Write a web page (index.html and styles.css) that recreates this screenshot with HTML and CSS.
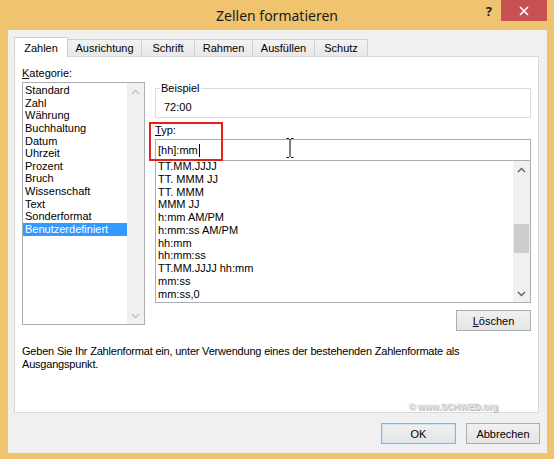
FILE: index.html
```html
<!DOCTYPE html>
<html lang="de">
<head>
  <meta charset="UTF-8" />
  <title>Zellen formatieren</title>
  <link rel="stylesheet" href="styles.css">
</head>
<body>
  <div class="window">
    <div class="titlebar">
      <span></span>
      <div class="title">Zellen formatieren</div>
      <div class="controls">
        <span class="help">?</span>
        <span class="close">
          <svg width="10" height="10" viewBox="0 0 10 10"><path d="M1 1L9 9M9 1L1 9" stroke="#fff" stroke-width="1.7"/></svg>
        </span>
      </div>
    </div>

    <div class="client">
      <div class="tabs">
        <div class="tab active tab-zahlen">Zahlen</div>
        <div class="tab tab-ausrichtung">Ausrichtung</div>
        <div class="tab tab-schrift">Schrift</div>
        <div class="tab tab-rahmen">Rahmen</div>
        <div class="tab tab-ausfuellen">Ausfüllen</div>
        <div class="tab tab-schutz">Schutz</div>
      </div>

      <div class="panel">
        <div class="columns">
          <div class="col-left">
            <div class="label"><u>K</u>ategorie:</div>
            <div class="listbox categories">
              <ul class="items">
                <li>Standard</li>
                <li>Zahl</li>
                <li>Währung</li>
                <li>Buchhaltung</li>
                <li>Datum</li>
                <li>Uhrzeit</li>
                <li>Prozent</li>
                <li>Bruch</li>
                <li>Wissenschaft</li>
                <li>Text</li>
                <li>Sonderformat</li>
                <li class="selected">Benutzerdefiniert</li>
              </ul>
              <div class="vscroll disabled">
                <span class="arrow"><svg width="9" height="6" viewBox="0 0 9 6"><polyline points="1,5 4.5,1.5 8,5" fill="none" stroke-width="1.4"/></svg></span>
                <span class="arrow"><svg width="9" height="6" viewBox="0 0 9 6"><polyline points="1,1 4.5,4.5 8,1" fill="none" stroke-width="1.4"/></svg></span>
              </div>
            </div>
          </div>

          <div class="col-right">
            <fieldset class="group">
              <legend>Beispiel</legend>
              <div class="sample">72:00</div>
            </fieldset>

            <div class="typ-area">
              <div class="label"><u>T</u>yp:</div>
              <div class="input">[hh]:mm<span class="caret"></span></div>
              <div class="listbox formats">
                <ul class="items">
                  <li>TT.MM.JJJJ</li>
                  <li>TT. MMM JJ</li>
                  <li>TT. MMM</li>
                  <li>MMM JJ</li>
                  <li>h:mm AM/PM</li>
                  <li>h:mm:ss AM/PM</li>
                  <li>hh:mm</li>
                  <li>hh:mm:ss</li>
                  <li>TT.MM.JJJJ hh:mm</li>
                  <li>mm:ss</li>
                  <li>mm:ss,0</li>
                </ul>
                <div class="vscroll">
                  <span class="arrow"><svg width="9" height="6" viewBox="0 0 9 6"><polyline points="1,5 4.5,1.5 8,5" fill="none" stroke-width="1.4"/></svg></span>
                  <span class="track"><span class="thumb"></span></span>
                  <span class="arrow"><svg width="9" height="6" viewBox="0 0 9 6"><polyline points="1,1 4.5,4.5 8,1" fill="none" stroke-width="1.4"/></svg></span>
                </div>
              </div>
              <span class="highlight"></span>
              <svg class="ibeam" width="8" height="20" viewBox="0 0 8 20">
                <path d="M0.5 0.5H3M5 0.5H7.5M4 1V19M0.5 19.5H3M5 19.5H7.5" stroke="#000" stroke-width="1" fill="none"/>
              </svg>
            </div>

            <div class="row-end">
              <button class="btn btn-delete"><u>L</u>öschen</button>
            </div>
          </div>
        </div>

        <p class="hint">Geben Sie Ihr Zahlenformat ein, unter Verwendung eines der bestehenden Zahlenformate als Ausgangspunkt.</p>

        <div class="watermark">© www.SCHWED.org</div>
      </div>

      <div class="buttons">
        <button class="btn btn-default">OK</button>
        <button class="btn btn-cancel">Abbrechen</button>
      </div>
    </div>
  </div>
</body>
</html>
```

FILE: styles.css
```css
:root {
  --frame: #f0c46e;
  --face: #f0f0f0;
  --line: #d9d9d9;
  --field-border: #abadb3;
  --select: #3399ff;
}

body {
  margin: 0;
  width: 554px;
  height: 459px;
  overflow: hidden;
  background-color: var(--frame);
  font-family: "Liberation Sans", Arial, sans-serif;
  font-size: 11px;
  color: #000;
}

.window {
  display: flex;
  flex-direction: column;
  height: 100%;
}

/* title bar */

.titlebar {
  height: 30px;
  display: grid;
  grid-template-columns: 1fr auto 1fr;
  align-items: start;
}

.title {
  font-family: "Noto Sans", sans-serif;
  font-size: 14px;
  line-height: 28px;
  padding-top: 2px;
  color: #1a1a1a;
}

.controls {
  justify-self: end;
  display: flex;
  align-items: flex-start;
  padding-right: 7px;
}

.help {
  font-family: "Noto Sans", sans-serif;
  font-size: 13px;
  font-weight: bold;
  line-height: 22px;
  margin-right: 9px;
  color: #222;
}

.close {
  width: 46px;
  height: 21px;
  background-color: #c75050;
  display: flex;
  align-items: center;
  justify-content: center;
}

/* dialog body */

.client {
  flex: 1;
  margin: 0 7px 6px 8px;
  padding: 7px 8px 9px 6px;
  background-color: var(--face);
  display: flex;
  flex-direction: column;
}

.tabs {
  display: flex;
  align-items: flex-end;
  height: 19px;
  position: relative;
  z-index: 1;
}

.tab {
  box-sizing: border-box;
  height: 17px;
  border: 1px solid #d0d0d0;
  border-left: none;
  border-bottom: none;
  background: linear-gradient(#f2f2f2, #e8e8e8);
  display: flex;
  align-items: center;
  justify-content: center;
}

.tab.active {
  height: 20px;
  margin-bottom: -1px;
  background: #fff;
  border-left: 1px solid #d0d0d0;
}

.tab-zahlen { width: 54px; }
.tab-ausrichtung { width: 74px; }
.tab-schrift { width: 53px; }
.tab-rahmen { width: 58px; }
.tab-ausfuellen { width: 62px; }
.tab-schutz { width: 53px; }

.panel {
  flex: 1;
  background-color: #fff;
  border: 1px solid var(--line);
  padding: 9px 7px 0 7px;
  display: flex;
  flex-direction: column;
}

.columns {
  display: flex;
  gap: 10px;
}

.col-left {
  width: 123px;
}

.col-right {
  flex: 1;
}

.label {
  line-height: 15px;
  margin-bottom: 1px;
}

/* list boxes */

.listbox {
  box-sizing: border-box;
  display: flex;
  border: 1px solid var(--field-border);
  overflow: hidden;
}

.items {
  flex: 1;
  list-style: none;
  margin: 0;
  padding: 0;
}

.items li {
  line-height: 12.65px;
  height: 12.65px;
  padding-left: 2px;
  white-space: nowrap;
}

.categories {
  height: 243px;
}

.categories .items {
  padding-top: 1px;
}

.items .selected {
  background-color: var(--select);
  color: #fff;
}

.vscroll {
  width: 17px;
  background-color: var(--face);
  display: flex;
  flex-direction: column;
  justify-content: space-between;
}

.vscroll .arrow {
  height: 17px;
  display: flex;
  align-items: center;
  justify-content: center;
}

.vscroll svg {
  stroke: #606060;
}

.vscroll.disabled svg {
  stroke: #c2c2c2;
}

.track {
  flex: 1;
  display: flex;
  flex-direction: column;
  justify-content: flex-end;
  padding-bottom: 32px;
}

.thumb {
  height: 29px;
  margin: 0 1px;
  background-color: #cdcdcd;
}

/* right side */

.group {
  margin: 15px 0 0;
  padding: 5px 0 3px 8px;
  min-width: 0;
  border: 1px solid #dcdcdc;
}

.group legend {
  line-height: 14px;
  padding: 0 1px;
  margin-left: -4px;
}

.sample {
  line-height: 14px;
}

.typ-area {
  position: relative;
  margin-top: 5px;
}

.input {
  box-sizing: border-box;
  height: 22px;
  line-height: 20px;
  padding-left: 2px;
  border: 1px solid var(--field-border);
  display: flex;
  align-items: center;
}

.caret {
  width: 1px;
  height: 13px;
  margin-left: 1px;
  background-color: #000;
}

.formats {
  height: 143px;
  margin-top: -1px;
}

.formats .items {
  margin-top: -1px;
}

.formats .items li {
  line-height: 12.75px;
  height: 12.75px;
}

.highlight {
  position: absolute;
  left: -6px;
  top: -1px;
  width: 74px;
  height: 39px;
  box-sizing: border-box;
  border: 2px solid #e8201c;
}

.ibeam {
  position: absolute;
  left: 131px;
  top: 15px;
}

.row-end {
  display: flex;
  justify-content: flex-end;
  margin-top: 7px;
}

/* buttons */

.btn {
  box-sizing: border-box;
  height: 21px;
  padding: 0;
  font-family: inherit;
  font-size: 11px;
  color: #000;
  border: 1px solid #adadad;
  background: linear-gradient(#f0f0f0, #e5e5e5);
}

.btn-delete { width: 75px; }

.btn-default {
  width: 75px;
  border-color: #7eb4ea;
  box-shadow: inset 0 0 0 1px #cfe3f7;
}

.btn-cancel { width: 74px; }

.hint {
  margin: 14px 0 0;
  line-height: 12.5px;
  letter-spacing: -0.2px;
}

.watermark {
  margin-top: auto;
  align-self: flex-end;
  margin-right: 33px;
  font-size: 9px;
  font-weight: bold;
  line-height: 10px;
  color: #d4d4d4;
  text-shadow: -1px -1px 0 #eee, 1px 1px 0 #bdbdbd;
}

.buttons {
  display: flex;
  justify-content: flex-end;
  gap: 10px;
  margin: 10px -1px 0 0;
}
```
